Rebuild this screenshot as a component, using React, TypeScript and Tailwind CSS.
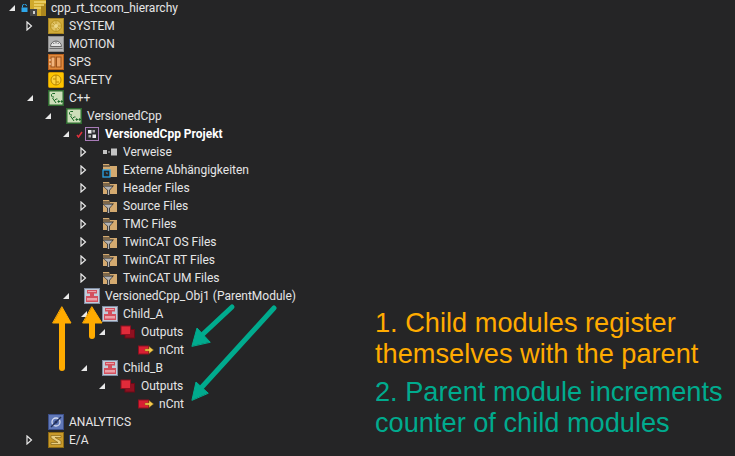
import type { ReactNode } from 'react';

type IconName =
  | 'solution' | 'system' | 'motion' | 'sps' | 'safety' | 'cpp' | 'project' | 'refs'
  | 'external' | 'filter' | 'module' | 'outputs' | 'var' | 'analytics' | 'io';

type Row = {
  label: string;
  depth: number;
  icon: IconName;
  expander?: 'open' | 'closed';
  marker?: 'lock' | 'check';
  bold?: boolean;
};

const rows: Row[] = [
  { label: 'cpp_rt_tccom_hierarchy', depth: 0, icon: 'solution', expander: 'open', marker: 'lock' },
  { label: 'SYSTEM', depth: 1, icon: 'system', expander: 'closed' },
  { label: 'MOTION', depth: 1, icon: 'motion' },
  { label: 'SPS', depth: 1, icon: 'sps' },
  { label: 'SAFETY', depth: 1, icon: 'safety' },
  { label: 'C++', depth: 1, icon: 'cpp', expander: 'open' },
  { label: 'VersionedCpp', depth: 2, icon: 'cpp', expander: 'open' },
  { label: 'VersionedCpp Projekt', depth: 3, icon: 'project', expander: 'open', marker: 'check', bold: true },
  { label: 'Verweise', depth: 4, icon: 'refs', expander: 'closed' },
  { label: 'Externe Abhängigkeiten', depth: 4, icon: 'external', expander: 'closed' },
  { label: 'Header Files', depth: 4, icon: 'filter', expander: 'closed' },
  { label: 'Source Files', depth: 4, icon: 'filter', expander: 'closed' },
  { label: 'TMC Files', depth: 4, icon: 'filter', expander: 'closed' },
  { label: 'TwinCAT OS Files', depth: 4, icon: 'filter', expander: 'closed' },
  { label: 'TwinCAT RT Files', depth: 4, icon: 'filter', expander: 'closed' },
  { label: 'TwinCAT UM Files', depth: 4, icon: 'filter', expander: 'closed' },
  { label: 'VersionedCpp_Obj1 (ParentModule)', depth: 3, icon: 'module', expander: 'open' },
  { label: 'Child_A', depth: 4, icon: 'module', expander: 'open' },
  { label: 'Outputs', depth: 5, icon: 'outputs', expander: 'open' },
  { label: 'nCnt', depth: 6, icon: 'var' },
  { label: 'Child_B', depth: 4, icon: 'module', expander: 'open' },
  { label: 'Outputs', depth: 5, icon: 'outputs', expander: 'open' },
  { label: 'nCnt', depth: 6, icon: 'var' },
  { label: 'ANALYTICS', depth: 1, icon: 'analytics' },
  { label: 'E/A', depth: 1, icon: 'io', expander: 'closed' },
];

function Svg({ children }: { children: ReactNode }) {
  return (
    <svg width="16" height="16" viewBox="0 0 16 16" className="block shrink-0">
      {children}
    </svg>
  );
}

function CppMark() {
  return (
    <g fill="none" stroke="#1e6b2a" strokeWidth="1">
      <path d="M7 3.5H4.5L3.5 4.5v1.5l1 1H6" />
      <path d="M4.5 8l3.5 5M6 11l2-2h1.5" />
      <path d="M9.5 11.5h2.5M10.7 10.2v2.6M12.5 11.5h2.5M13.7 10.2v2.6" />
    </g>
  );
}

function TreeIcon({ name }: { name: IconName }) {
  switch (name) {
    case 'solution':
      return (
        <Svg>
          <rect x="0" y="0" width="16" height="16" fill="#d0a92c" />
          <rect x="11" y="4" width="5" height="12" fill="#ad871d" />
          <path d="M4 2h12M4 5h10M4 8h7" stroke="#efd671" strokeWidth="1.3" />
          <rect x="0" y="9" width="7" height="7" fill="#454545" />
          <rect x="3" y="11" width="2" height="3" fill="#cfcfcf" />
        </Svg>
      );
    case 'system':
      return (
        <Svg>
          <rect x="0" y="0" width="16" height="16" rx="1" fill="#d0aa3a" />
          <rect x="0.5" y="0.5" width="15" height="15" rx="1" fill="none" stroke="#a8851f" />
          <circle cx="8" cy="8" r="5.5" fill="#dfc162" stroke="#b8941f" />
          <path d="M8 2.5v11M2.5 8h11M4.2 4.2l7.6 7.6" stroke="#c09c2c" />
          <circle cx="8" cy="8" r="2" fill="#ecd88a" />
        </Svg>
      );
    case 'motion':
      return (
        <Svg>
          <rect x="0" y="0" width="16" height="16" rx="1" fill="#b4b4b4" />
          <rect x="0.5" y="0.5" width="15" height="15" rx="1" fill="none" stroke="#8e8e8e" />
          <path d="M2.5 10.5a5.5 5.5 0 0 1 11 0z" fill="#e4e4e4" stroke="#666" />
          <path d="M8 5.5v2M5.2 6.8l1 1.2M10.8 6.8l-1 1.2" stroke="#666" />
          <path d="M1.5 12.5h13" stroke="#6e6e6e" />
        </Svg>
      );
    case 'sps':
      return (
        <Svg>
          <rect x="0.5" y="0.5" width="15" height="15" fill="#e08a3c" stroke="#b7611f" />
          <rect x="3" y="3" width="4" height="10" fill="#f3b57c" stroke="#99501a" />
          <rect x="8.5" y="3" width="4.5" height="10" fill="#eba263" stroke="#99501a" />
          <path d="M1 6h2M1 10h2" stroke="#fbe2c9" />
        </Svg>
      );
    case 'safety':
      return (
        <Svg>
          <rect x="0.5" y="0.5" width="15" height="15" rx="1" fill="#fdc400" stroke="#d29a00" />
          <circle cx="8" cy="8" r="5" fill="#fdd23d" stroke="#b98600" />
          <path d="M8 3v10M5 7h3M8 10h3" stroke="#b98600" />
        </Svg>
      );
    case 'cpp':
      return (
        <Svg>
          <rect x="0" y="0" width="16" height="16" fill="#2f6b30" />
          <rect x="1.5" y="1.5" width="13" height="13" fill="#cddfba" />
          <CppMark />
        </Svg>
      );
    case 'project':
      return (
        <Svg>
          <rect x="1.5" y="1.5" width="13" height="13" fill="#2a2a2e" stroke="#a97cb8" />
          <path d="M4 4h3.5v3.5H4zM8.5 8.5H12V12H8.5z" fill="#eeeeee" />
          <path d="M8.5 4H11v2.5H8.5zM4.5 9H7v2.5H4.5z" fill="#a8a8a8" />
        </Svg>
      );
    case 'refs':
      return (
        <Svg>
          <rect x="1" y="6" width="4" height="4" fill="#c4c4c4" />
          <rect x="6" y="7.5" width="2" height="1" fill="#c4c4c4" />
          <rect x="9" y="4.5" width="6" height="7" fill="#c4c4c4" />
        </Svg>
      );
    case 'external':
      return (
        <Svg>
          <path d="M1 2h6l1 2h7v11H1z" fill="#d4aa70" />
          <path d="M1 4h7" stroke="#252526" />
          <rect x="1" y="8" width="7" height="7" fill="#252526" stroke="#2aa3e6" strokeWidth="1.3" />
          <path d="M3.5 10.5h2v2z" fill="#2aa3e6" />
        </Svg>
      );
    case 'filter':
      return (
        <Svg>
          <path d="M1 2h6l1 2h7v10H1z" fill="#d4aa70" />
          <path d="M1 4h7" stroke="#252526" />
          <path d="M0 5.5h12L8 10v6H5v-6z" fill="#252526" />
          <path d="M1.5 6.5h9L7.2 10v5H5.8v-5z" fill="#b4b4b4" />
        </Svg>
      );
    case 'module':
      return (
        <Svg>
          <rect x="0" y="0" width="16" height="16" fill="#c3ccd9" />
          <rect x="0.5" y="0.5" width="15" height="15" fill="none" stroke="#7f8da3" />
          <path d="M3 2h10v3.5h-3V8h4v6H2V8h4V5.5H3z" fill="#d4505e" />
          <path d="M3 10h10v2.5H3zM4 3h8v1H4z" fill="#eba0a8" />
        </Svg>
      );
    case 'outputs':
      return (
        <Svg>
          <rect x="5" y="5.5" width="9.5" height="8.5" fill="#8f1020" stroke="#6b0a16" />
          <rect x="1" y="2" width="9.5" height="8.5" fill="#e02b3a" stroke="#8f1020" />
        </Svg>
      );
    case 'var':
      return (
        <Svg>
          <rect x="0.5" y="4" width="10" height="8" fill="#d91f33" stroke="#8f1020" />
          <path d="M7 7h4V4.5L15.5 8 11 11.5V9H7z" fill="#f3c94f" stroke="#8f6f10" strokeWidth="0.5" />
        </Svg>
      );
    case 'analytics':
      return (
        <Svg>
          <rect x="0.5" y="0.5" width="15" height="15" fill="#6078b8" stroke="#3c4f88" />
          <circle cx="8" cy="8" r="4" fill="none" stroke="#d5dcf0" strokeWidth="1.3" />
          <path d="M3 13L13 3" stroke="#23305a" strokeWidth="1.4" />
          <circle cx="8" cy="8" r="1.5" fill="#23305a" />
        </Svg>
      );
    case 'io':
      return (
        <Svg>
          <rect x="0.5" y="0.5" width="15" height="15" fill="#c99a2a" stroke="#8d6a14" />
          <path d="M3 3.5h10v2H7L13 9v3.5H3v-2h7L3 6z" fill="#e8cd80" stroke="#7a5a10" strokeWidth="0.6" />
        </Svg>
      );
  }
}

function Expander({ state }: { state?: 'open' | 'closed' }) {
  return (
    <span className="flex w-4 h-4 shrink-0 items-center justify-center">
      {state === 'open' && (
        <svg width="8" height="8" viewBox="0 0 8 8">
          <path d="M7 1v6H1z" fill="#e8e8e8" />
        </svg>
      )}
      {state === 'closed' && (
        <svg width="7" height="10" viewBox="0 0 7 10" className="-ml-px">
          <path d="M1 1l4.5 4L1 9z" fill="none" stroke="#e8e8e8" strokeWidth="1.2" />
        </svg>
      )}
    </span>
  );
}

function Marker({ kind }: { kind?: 'lock' | 'check' }) {
  return (
    <span className="flex w-[10px] h-4 shrink-0 items-center">
      {kind === 'lock' && (
        <svg width="7" height="8" viewBox="0 0 7 8" className="ml-px">
          <path d="M1.5 3.5V2a2 2 0 0 1 4 0" fill="none" stroke="#2ea6e8" />
          <rect x="0.5" y="3.5" width="6" height="4.5" fill="#2ea6e8" />
        </svg>
      )}
      {kind === 'check' && (
        <svg width="7" height="7" viewBox="0 0 7 7" className="ml-[2px]">
          <path d="M1 4l1.5 2L6 1" fill="none" stroke="#e0303c" strokeWidth="1.5" />
        </svg>
      )}
    </span>
  );
}

function TreeRow({ row }: { row: Row }) {
  return (
    <div className="flex h-[18px] items-center" style={{ paddingLeft: 4 + row.depth * 18 }}>
      <Expander state={row.expander} />
      <Marker kind={row.marker} />
      <TreeIcon name={row.icon} />
      <span className={`ml-[5px] whitespace-nowrap ${row.bold ? 'font-bold text-white' : ''}`}>{row.label}</span>
    </div>
  );
}

// arrows drawn over the tree, same as in the annotated picture
function Arrows() {
  return (
    <svg width="735" height="456" viewBox="0 0 735 456" className="absolute left-0 top-0 pointer-events-none">
      <g fill="#ffab00" stroke="#ffab00" strokeLinecap="round" strokeLinejoin="round">
        <path d="M62 322V368" strokeWidth="6" fill="none" />
        <path d="M62 307L71 323H53z" strokeWidth="1" />
        <path d="M92 322V336" strokeWidth="6" fill="none" />
        <path d="M92 307L102 323H83z" strokeWidth="1" />
      </g>
      <g fill="#00ab8e" stroke="#00ab8e" strokeLinecap="round" strokeLinejoin="round">
        <path d="M232 307L202 335" strokeWidth="5" fill="none" />
        <path d="M192 346L197 328L210 342z" strokeWidth="1" />
        <path d="M274 308L202 387" strokeWidth="5" fill="none" />
        <path d="M192 400L196 382L208 393z" strokeWidth="1" />
      </g>
    </svg>
  );
}

export default function App() {
  return (
    <div className="relative flex w-[735px] h-[456px] overflow-hidden bg-[#252526]">
      <div className="w-[375px] shrink-0 -mt-px text-[12px] text-[#e6e6e6] font-['Roboto','Noto_Sans',sans-serif]">
        {rows.map((row, i) => (
          <TreeRow key={i} row={row} />
        ))}
      </div>
      <div className="pt-[308px] text-[27.2px] leading-[30.5px] whitespace-nowrap font-['Liberation_Sans',Arial,sans-serif]">
        <p className="text-[#ffab00]">
          1. Child modules register
          <br />
          themselves with the parent
        </p>
        <p className="mt-2 text-[#00ab8e]">
          2. Parent module increments
          <br />
          counter of child modules
        </p>
      </div>
      <Arrows />
    </div>
  );
}
